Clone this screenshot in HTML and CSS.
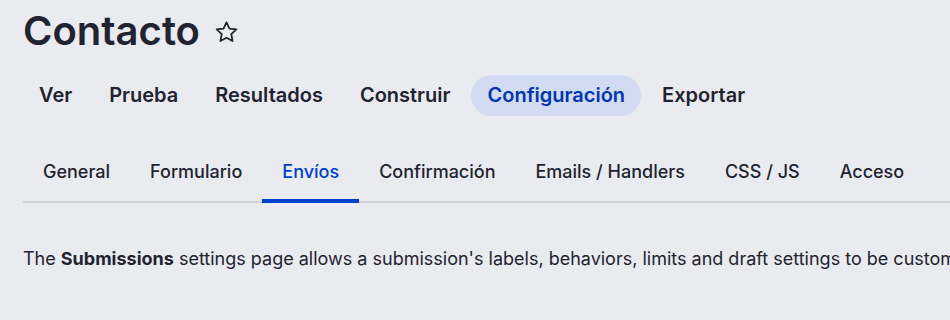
FILE: index.html
```html
<!DOCTYPE html>
<html lang="es">
<head>
<meta charset="utf-8">
<title>Contacto</title>
<link rel="stylesheet" href="styles.css">
</head>
<body>
<div class="page">
  <div class="title-row">
    <h1 class="title">Contacto</h1>
    <svg class="star" width="25" height="25" viewBox="0 0 24 24" aria-hidden="true">
      <path d="M12 2.2l2.85 6.05 6.6.82-4.86 4.56 1.25 6.55L12 17l-5.84 3.18 1.25-6.55L2.55 9.07l6.6-.82z" fill="none" stroke="#222330" stroke-width="1.7" stroke-linejoin="round"/>
    </svg>
  </div>
  <nav class="primary-tabs">
    <a class="ptab">Ver</a>
    <a class="ptab">Prueba</a>
    <a class="ptab">Resultados</a>
    <a class="ptab">Construir</a>
    <a class="ptab active">Configuración</a>
    <a class="ptab">Exportar</a>
  </nav>
  <nav class="secondary-tabs">
    <a class="stab">General</a>
    <a class="stab">Formulario</a>
    <a class="stab active">Envíos</a>
    <a class="stab">Confirmación</a>
    <a class="stab">Emails / Handlers</a>
    <a class="stab">CSS / JS</a>
    <a class="stab">Acceso</a>
  </nav>
  <p class="desc">The <strong>Submissions</strong> settings page allows a submission's labels, behaviors, limits and draft settings to be customized for a webform.</p>
</div>
</body>
</html>
```
FILE: styles.css
```css
html, body {
  margin: 0;
  padding: 0;
  background: #eaebf0;
  overflow: hidden;
}
body {
  font-family: Inter, "Noto Sans", sans-serif;
  color: #222330;
}
.page {
  padding: 7px 0 0 23px;
  white-space: nowrap;
}
.title-row {
  display: flex;
  align-items: center;
  gap: 14px;
  height: 48px;
}
.title {
  margin: 0;
  font-size: 40px;
  line-height: 48px;
  font-weight: 600;
  letter-spacing: 0;
  color: #222330;
}
.star {
  display: block;
  margin-top: 2px;
}
.primary-tabs {
  display: flex;
  gap: 5px;
  margin-top: 20px;
}
.ptab {
  display: block;
  padding: 8px 16px;
  font-size: 20px;
  line-height: 25px;
  font-weight: 600;
  color: #222330;
  border-radius: 999px;
}
.ptab.active {
  background: #d2dbf2;
  color: #0036b1;
}
.secondary-tabs {
  display: flex;
  margin-top: 39px;
  border-bottom: 2px solid #d3d4d9;
  margin-right: -40px;
}
.stab {
  position: relative;
  display: block;
  padding: 0 20px;
  height: 46px;
  line-height: 33px;
  font-size: 18px;
  font-weight: 500;
  color: #222330;
}
.stab.active {
  color: #003ecc;
}
.stab.active::after {
  content: "";
  position: absolute;
  left: 0;
  right: 0;
  bottom: -2px;
  height: 4px;
  background: #003ecc;
}
.desc {
  margin: 44px 0 0;
  font-size: 18px;
  line-height: 24px;
  color: #222330;
}
.desc strong {
  font-weight: 700;
}
```
